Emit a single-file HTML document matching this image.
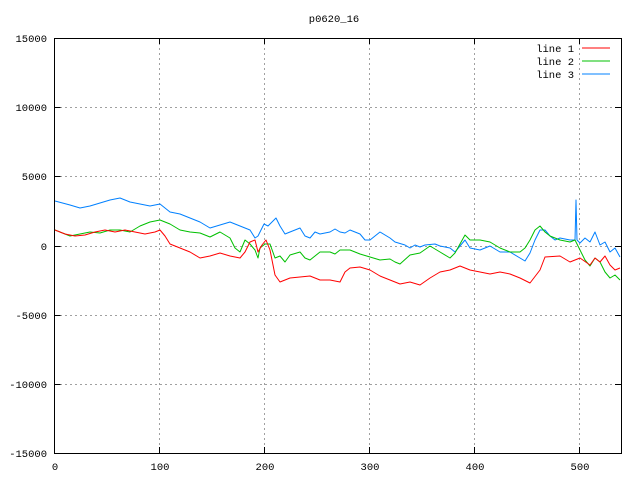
<!DOCTYPE html>
<html><head><style>body{margin:0;background:#fff}svg{display:block}text{font-family:"Liberation Mono",monospace;font-size:10.5px;fill:#000}</style></head><body>
<svg width="640" height="480" viewBox="0 0 640 480">
<rect width="640" height="480" fill="#fff"/>
<g stroke="#a0a0a0" stroke-dasharray="2,3" stroke-width="1">
<path d="M159.5 38V453M264.5 38V453M369.5 38V453M474.5 38V453M579.5 38V453"/>
<path d="M55 107.5H621M55 176.5H621M55 246.5H621M55 315.5H621M55 384.5H621"/>
</g>
<rect x="54.5" y="38.5" width="567" height="415" fill="none" stroke="#000"/>
<g stroke="#000">
<path d="M54.5 38.5h6M54.5 107.5h6M54.5 176.5h6M54.5 246.5h6M54.5 315.5h6M54.5 384.5h6M621 38.5h-6M621 107.5h-6M621 176.5h-6M621 246.5h-6M621 315.5h-6M621 384.5h-6"/>
<path d="M54.5 453v-6M159.5 453v-6M264.5 453v-6M369.5 453v-6M474.5 453v-6M579.5 453v-6M159.5 38v6M264.5 38v6M369.5 38v6M474.5 38v6M579.5 38v6"/>
</g>
<g text-anchor="end">
<text x="47" y="42">15000</text><text x="47" y="111">10000</text><text x="47" y="180">5000</text><text x="47" y="250">0</text><text x="47" y="319">-5000</text><text x="47" y="388">-10000</text><text x="47" y="457">-15000</text>
</g>
<g text-anchor="middle">
<text x="55" y="470">0</text><text x="160" y="470">100</text><text x="265" y="470">200</text><text x="370" y="470">300</text><text x="475" y="470">400</text><text x="580" y="470">500</text>
<text x="334" y="22">p0620_16</text>
</g>
<g text-anchor="end"><text x="574" y="52">line 1</text><text x="574" y="65">line 2</text><text x="574" y="78">line 3</text></g>
<path d="M582 48h28" stroke="#ff0000"/><path d="M582 61h28" stroke="#00c000"/><path d="M582 74h28" stroke="#0080ff"/>
<g fill="none" stroke-width="1" stroke-linejoin="round">
<polyline stroke="#0080ff" points="55,201 70,205 80,208 90,206 100,203 110,200 120,198 130,202 140,204 150,206 160,204 170,212 180,214 190,218 200,222 210,228 220,225 230,222 240,226 245,228 250,230 255,238 258,236 262,228 264,224 268,226 276,218 280,226 285,234 290,232 300,228 305,236 310,238 315,232 320,234 330,232 335,229 340,232 345,233 350,230 360,234 365,240 370,240 375,236 380,232 390,238 395,242 405,245 410,248 415,245 420,247 425,245 435,244 440,246 445,247 450,248 455,252 460,246 465,240 470,248 480,250 490,246 500,252 510,252 520,258 525,261 530,253 535,240 540,230 545,230 550,236 555,240 560,238 570,240 575,240 576,200 577,240 580,243 585,238 590,242 595,232 600,245 605,242 610,252 615,248 620,257"/>
<polyline stroke="#00c000" points="55,230 60,232 70,236 80,234 90,232 100,233 110,230 120,230 130,232 140,226 150,222 160,220 170,224 180,230 190,232 200,233 210,237 220,232 230,238 235,248 240,252 245,240 250,244 255,250 258,258 260,248 265,244 270,244 275,258 280,256 285,262 290,255 300,252 305,258 310,260 320,252 330,252 335,254 340,250 350,250 360,254 370,257 380,260 390,259 395,262 400,264 410,255 420,253 430,246 440,252 450,258 455,253 465,235 470,240 480,240 490,242 495,245 500,248 510,252 520,252 525,248 530,240 535,230 540,226 545,232 550,236 555,238 560,240 570,242 575,240 580,250 585,260 590,266 595,258 600,262 605,272 610,278 615,275 620,280"/>
<polyline stroke="#ff0000" points="55,230 65,234 75,236 85,235 95,232 105,230 115,232 125,230 135,232 145,234 155,232 160,230 165,236 170,244 180,248 190,252 200,258 210,256 220,253 230,256 240,258 245,252 250,242 255,240 258,252 262,245 266,240 270,250 275,275 280,282 290,278 300,277 310,276 320,280 330,280 340,282 345,272 350,268 360,267 370,270 380,276 390,280 400,284 410,282 420,285 430,278 440,272 450,270 460,266 470,270 480,272 490,274 500,272 510,274 520,278 530,283 540,270 545,257 560,256 570,262 580,258 590,265 595,258 600,262 605,256 610,265 615,270 620,268"/>
</g>
</svg>
</body></html>
